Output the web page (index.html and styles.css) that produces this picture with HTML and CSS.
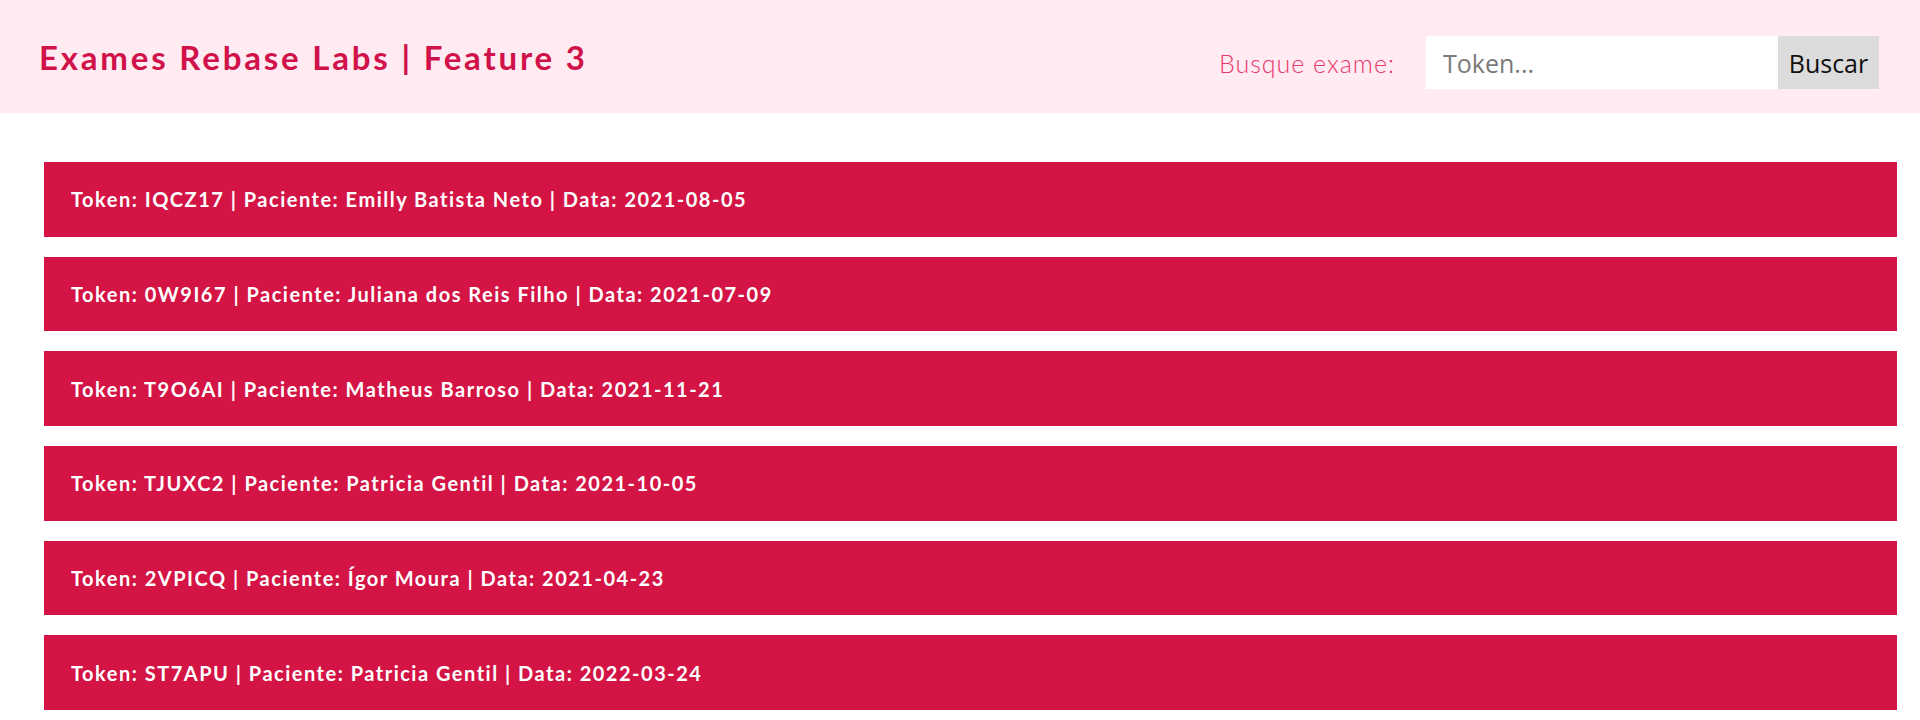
FILE: index.html
```html
<!DOCTYPE html>
<html lang="pt-BR">
<head>
<meta charset="utf-8">
<title>Exames Rebase Labs</title>
<link rel="stylesheet" href="styles.css">
</head>
<body>
<header class="topbar">
  <h1 class="title">Exames Rebase Labs | Feature 3</h1>
  <form class="search">
    <label class="search-label" for="token">Busque exame:</label>
    <div class="search-field">
      <input class="search-input" id="token" type="text" placeholder="Token...">
      <button class="search-button" type="button">Buscar</button>
    </div>
  </form>
</header>
<main class="exams">
  <div class="exam">Token: IQCZ17 | Paciente: Emilly Batista Neto | Data: 2021-08-05</div>
  <div class="exam">Token: 0W9I67 | Paciente: Juliana dos Reis Filho | Data: 2021-07-09</div>
  <div class="exam">Token: T9O6AI | Paciente: Matheus Barroso | Data: 2021-11-21</div>
  <div class="exam">Token: TJUXC2 | Paciente: Patricia Gentil | Data: 2021-10-05</div>
  <div class="exam">Token: 2VPICQ | Paciente: Ígor Moura | Data: 2021-04-23</div>
  <div class="exam">Token: ST7APU | Paciente: Patricia Gentil | Data: 2022-03-24</div>
</main>
</body>
</html>
```
FILE: styles.css
```css
html, body {
  margin: 0;
  padding: 0;
  background: #ffffff;
}
body {
  font-family: "Lato", "Open Sans", sans-serif;
}
.topbar {
  display: flex;
  align-items: center;
  justify-content: space-between;
  height: 113px;
  box-sizing: border-box;
  padding: 0 41px 0 39px;
  background: #ffebf1;
}
.title {
  margin: 0;
  font-family: "Lato", sans-serif;
  font-weight: 700;
  font-size: 33px;
  color: #d1124a;
  letter-spacing: 2.8px;
}
.search {
  display: flex;
  align-items: center;
  gap: 31px;
  margin-top: 12px;
}
.search-label {
  font-family: "Lato", sans-serif;
  font-weight: 300;
  font-size: 25px;
  letter-spacing: 1px;
  color: #e8376c;
}
.search-field {
  display: flex;
  height: 53px;
}
.search-input {
  width: 352px;
  box-sizing: border-box;
  border: none;
  outline: none;
  padding: 0 17px;
  background: #ffffff;
  font-family: "Open Sans", sans-serif;
  font-size: 25px;
  color: #333;
}
.search-input::placeholder {
  color: #7a7a7a;
}
.search-button {
  width: 101px;
  border: none;
  padding: 0;
  background: #dcdcdc;
  font-family: "Open Sans", sans-serif;
  font-size: 25px;
  color: #111;
}
.exams {
  display: flex;
  flex-direction: column;
  gap: 20px;
  padding: 49px 23px 0 44px;
}
.exam {
  height: 74.7px;
  display: flex;
  align-items: center;
  padding-left: 27px;
  background: #d31445;
  color: #ffffff;
  font-family: "Lato", sans-serif;
  font-weight: 700;
  font-size: 20px;
  letter-spacing: 1.5px;
}
```
